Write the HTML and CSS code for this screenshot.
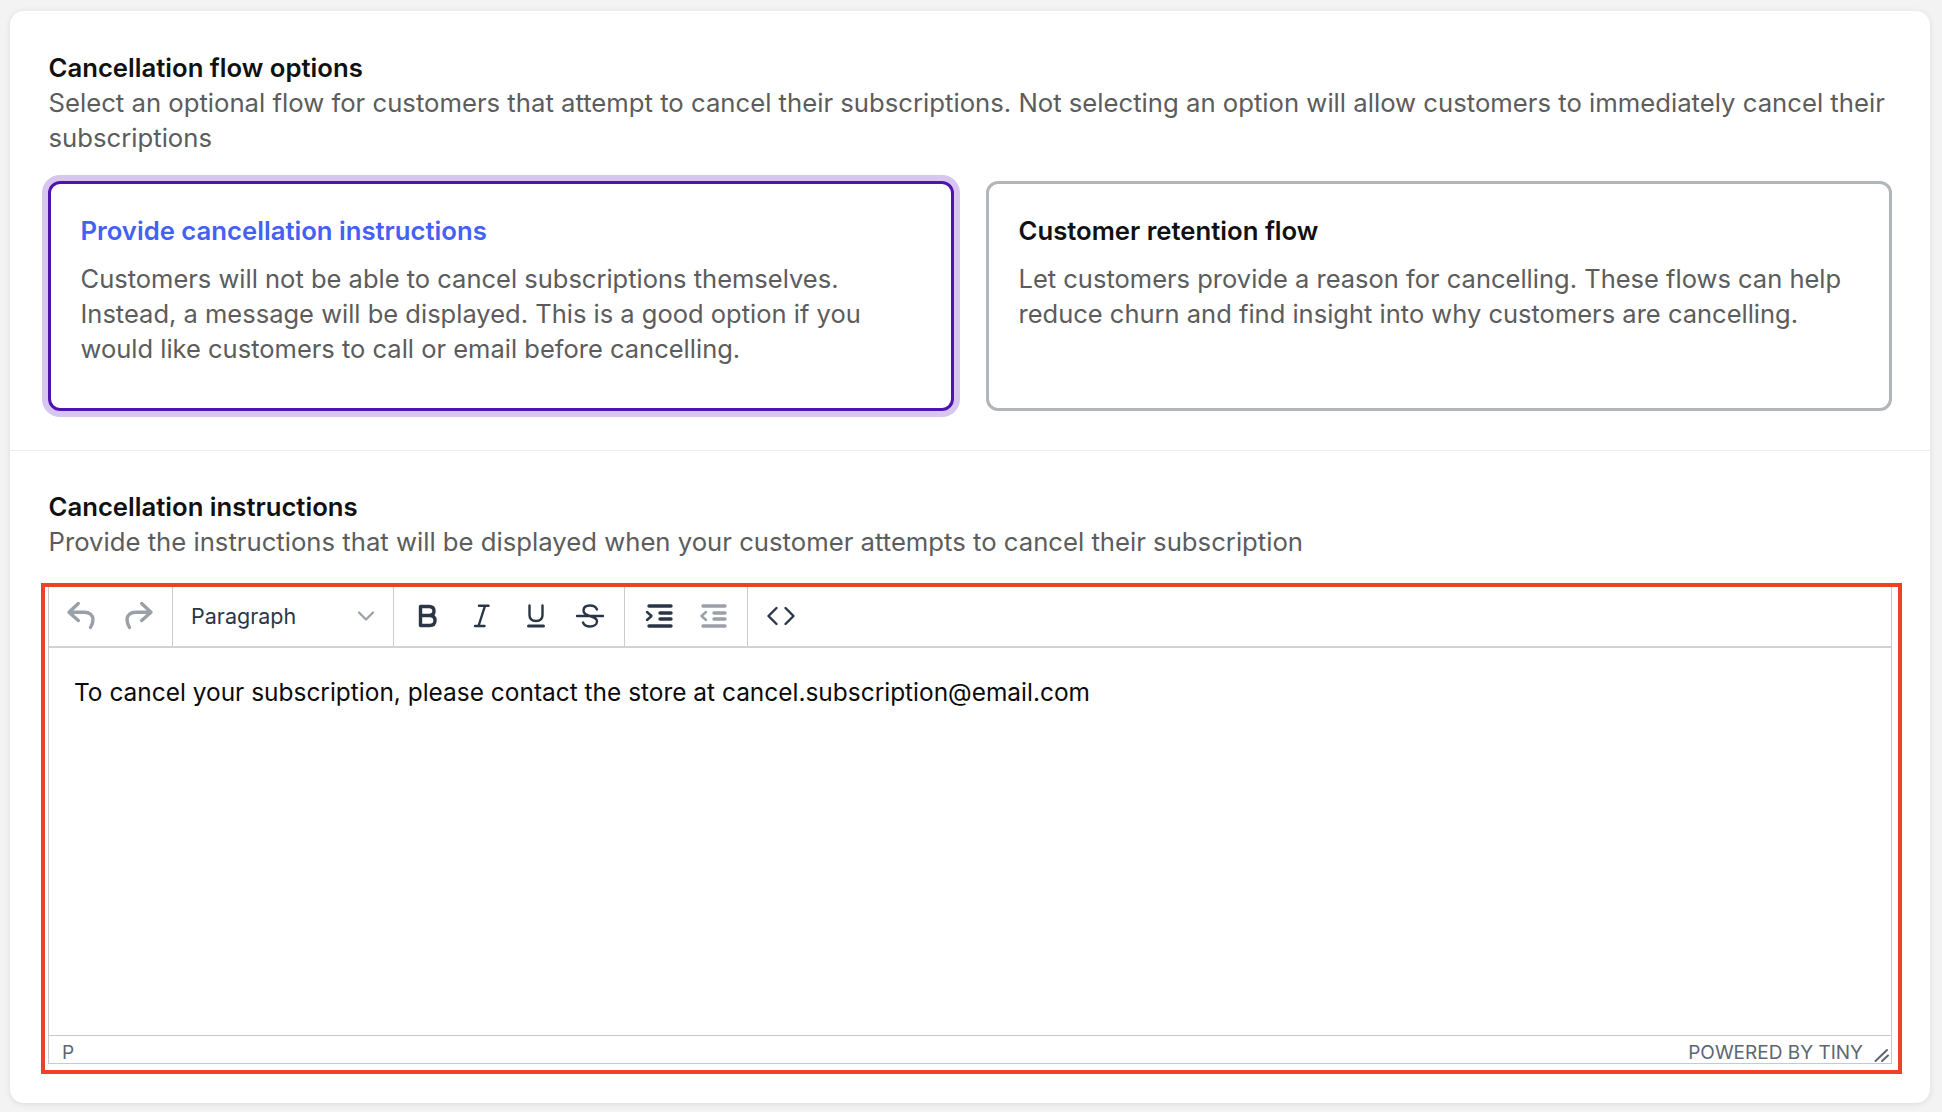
FILE: index.html
```html
<!DOCTYPE html>
<html lang="en">
<head>
<meta charset="utf-8">
<title>Cancellation flow options</title>
<link rel="stylesheet" href="styles.css">
</head>
<body>
<main class="panel">
  <section class="section section-flow">
    <h2 class="heading">Cancellation flow options</h2>
    <p class="sub">Select an optional flow for customers that attempt to cancel their subscriptions. Not selecting an option will allow customers to immediately cancel their subscriptions</p>
    <div class="options">
      <div class="option option-selected">
        <h3 class="option-title">Provide cancellation instructions</h3>
        <p class="option-text">Customers will not be able to cancel subscriptions themselves. Instead, a message will be displayed. This is a good option if you would like customers to call or email before cancelling.</p>
      </div>
      <div class="option">
        <h3 class="option-title">Customer retention flow</h3>
        <p class="option-text">Let customers provide a reason for cancelling. These flows can help reduce churn and find insight into why customers are cancelling.</p>
      </div>
    </div>
  </section>
  <section class="section section-instructions">
    <h2 class="heading">Cancellation instructions</h2>
    <p class="sub">Provide the instructions that will be displayed when your customer attempts to cancel their subscription</p>
    <div class="highlight">
      <div class="editor">
        <div class="toolbar">
          <div class="group group-history">
            <button class="tool muted"><svg viewBox="0 0 32 32"><path class="bold" d="M12.300 3.500 3 12.200l9.300 8.300M3 12.200h15.500c5 0 8.500 3 8.500 7 0 3-1 5.800-2.500 8.300"/></svg></button>
            <button class="tool muted"><svg viewBox="0 0 32 32"><path class="bold" d="M19.700 3.500 29 12.200l-9.300 8.300M29 12.200H13.500c-5 0-8.500 3-8.500 7 0 3 1 5.800 2.500 8.300"/></svg></button>
          </div>
          <div class="group group-format">
            <span class="format-label">Paragraph</span>
            <svg class="chevron" viewBox="0 0 18 12"><path d="M2 2.500 9 9.500l7-7"/></svg>
          </div>
          <div class="group group-style">
            <button class="tool"><svg viewBox="0 0 32 32"><path class="bold" d="M8.500 15.500h9c3.500 0 5.500 2 5.500 5s-2 5-5.500 5h-9v-19h8.500c3 0 5 1.700 5 4.500s-2 4.500-5 4.500"/></svg></button>
            <button class="tool"><svg viewBox="0 0 32 32"><path class="thin" d="M13 5.800h9.500M9 26h9.500M19 5.800 12.500 26"/></svg></button>
            <button class="tool"><svg viewBox="0 0 32 32"><path class="thin" d="M9.500 5.500V15c0 4 2.500 6 6.500 6s6.500-2 6.500-6V5.500"/><path d="M8.500 26h15"/></svg></button>
            <button class="tool"><svg viewBox="0 0 32 32"><path class="thin" d="M3 16h26M23 9.500C22 7 19.500 5.500 16 5.500c-4 0-6.500 2-6.500 5 0 2 1 4 6.500 5.500 5.500 1.500 7 3 7 5.500 0 3-3 5-7 5-3.500 0-6-1.500-7-4"/></svg></button>
          </div>
          <div class="group group-indent">
            <button class="tool"><svg viewBox="0 0 32 32"><path class="bold" d="M6 6h22M17 13h11M17 19h11M6 26h22"/><path class="thin" d="m4 12 4.500 4L4 20"/></svg></button>
            <button class="tool muted"><svg viewBox="0 0 32 32"><path class="bold" d="M6 6h22M17 13h11M17 19h11M6 26h22"/><path class="thin" d="M9 12l-4.500 4L9 20"/></svg></button>
          </div>
          <div class="group group-code">
            <button class="tool"><svg viewBox="0 0 32 32"><path class="thin" d="M11.500 8 3.500 16l8 8M20.500 8l8 8-8 8"/></svg></button>
          </div>
        </div>
        <div class="content">To cancel your subscription, please contact the store at cancel.subscription@email.com</div>
        <div class="statusbar">
          <span class="path">P</span>
          <span class="brand">POWERED BY TINY</span>
          <svg class="grip" viewBox="0 0 16 16"><path d="M1.500 14 13 3M8 14l6-5.500"/></svg>
        </div>
      </div>
    </div>
  </section>
</main>
</body>
</html>
```

FILE: styles.css
```css
* { box-sizing: border-box; }
html, body { margin: 0; }
body {
  background: #f3f3f3;
  padding: 11px 12px 9px 10px;
  font-family: Inter, "Liberation Sans", sans-serif;
  font-size: 25.7px;
  line-height: 35px;
  color: #5c5c5c;
}
.panel {
  background: #fff;
  border-radius: 14px;
  box-shadow: 0 1px 6px rgba(0, 0, 0, 0.1);
  height: 1092px;
}
.section-flow {
  padding: 38.5px 38px 39px 38.5px;
  border-bottom: 1px solid #ececec;
}
.section-instructions { padding: 38px 28px 0 38.5px; }
.heading, .option-title {
  margin: 0;
  font-size: 25.7px;
  font-weight: 600;
  color: #111;
}
.sub, .option-text { margin: 0; }
.options {
  display: grid;
  grid-template-columns: 1fr 1fr;
  gap: 32px;
  margin: 26px 0 0 -0.5px;
}
.option {
  height: 230px;
  border: 3px solid #b1b6ba;
  border-radius: 12px;
  padding: 29px 29px 0 29.5px;
}
.option-selected {
  border-color: #4f14b0;
  box-shadow: 0 0 0 6px #d7c6ef;
}
.option-selected .option-title { color: #4361f5; }
.option-text { margin-top: 13px; font-size: 25.5px; }
.highlight {
  margin: 24px 0 0 -7.5px;
  border: 4px solid #ef4126;
  padding: 0 6px 6px 3px;
}
.editor {
  height: 477px;
  border: 1px solid #c9c9c9;
  border-top: 0;
  display: flex;
  flex-direction: column;
}
.toolbar {
  display: flex;
  height: 61px;
  border-bottom: 2px solid #d2d2d2;
}
.group {
  display: flex;
  align-items: center;
  padding: 0 8px;
  gap: 23px;
  border-right: 1px solid #cccccc;
}
.group-history { width: 124px; padding: 0 0 0 17px; gap: 24px; }
.group-format {
  width: 221px;
  padding: 0 18px 0 18px;
  justify-content: space-between;
  gap: 0;
}
.group-style { width: 231px; padding: 0 0 0 18px; gap: 22px; }
.group-indent { width: 123px; padding: 0 0 0 18px; gap: 22px; }
.group-code { border-right: 0; padding: 0 0 0 17px; }
.format-label { font-size: 21.5px; color: #2a3646; }
.tool {
  width: 32px;
  height: 32px;
  padding: 0;
  border: 0;
  background: none;
  color: #2a3646;
}
.tool.muted { color: #9aa0a8; }
.tool svg { display: block; width: 32px; height: 32px; }
.tool path {
  fill: none;
  stroke: currentColor;
  stroke-width: 3;
  stroke-linecap: round;
  stroke-linejoin: round;
}
.tool path.thin { stroke-width: 2.4; }
.tool path.bold { stroke-width: 3.4; }
.chevron { width: 18px; height: 12px; }
.chevron path { fill: none; stroke: #9aa0a8; stroke-width: 2.2; stroke-linecap: round; stroke-linejoin: round; }
.content {
  flex: 1;
  padding: 27px 25px 0;
  font-size: 24.45px;
  color: #0b0b0b;
}
.statusbar {
  height: 28px;
  display: flex;
  align-items: center;
  border-top: 1px solid #c9c9c9;
  padding: 7px 1px 0 13px;
  font-size: 19px;
  line-height: 20px;
  color: #5d6672;
}
.path { flex: 1; }
.brand { margin-right: 11px; }
.grip { width: 16px; height: 16px; margin-top: 5px; }
.grip path { fill: none; stroke: #5d6672; stroke-width: 2; stroke-linecap: round; }
```
